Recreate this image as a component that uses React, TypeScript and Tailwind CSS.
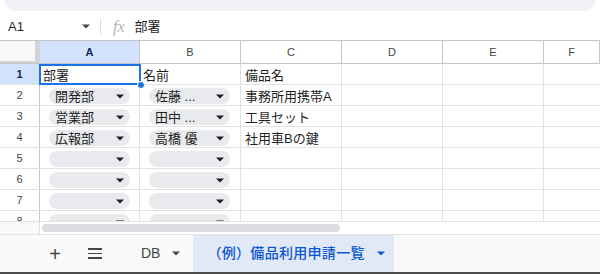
import React from "react";

const font = { fontFamily: '"Liberation Sans", Arial, "Noto Sans CJK JP", sans-serif' };

const cols = ["A", "B", "C", "D", "E", "F"];
const colW = ["w-[100px]", "w-[101px]", "w-[101px]", "w-[101px]", "w-[101px]", "flex-1"];

const rows: { a?: string; b?: string; c?: string; chip: boolean }[] = [
  { a: "部署", b: "名前", c: "備品名", chip: false },
  { a: "開発部", b: "佐藤 ...", c: "事務所用携帯A", chip: true },
  { a: "営業部", b: "田中 ...", c: "工具セット", chip: true },
  { a: "広報部", b: "高橋 優", c: "社用車Bの鍵", chip: true },
  { chip: true },
  { chip: true },
  { chip: true },
  { chip: true },
];

function Caret({ className = "" }: { className?: string }) {
  return (
    <svg width="8" height="5" viewBox="0 0 8 5" className={className}>
      <path d="M0 0.5h8L4 4.5z" fill="currentColor" />
    </svg>
  );
}

function Chip({ text, ml }: { text?: string; ml: string }) {
  return (
    <div className={`${ml} mt-[3px] flex h-[16px] w-[81px] items-center justify-between rounded-full bg-[#e8eaed] pl-[6px] pr-[6px]`}>
      <span className="truncate text-[13px] leading-none text-[#1f1f1f]">{text}</span>
      <Caret className="shrink-0 text-[#1f1f1f]" />
    </div>
  );
}

export default function App() {
  return (
    <div className="relative flex h-[274px] w-[600px] flex-col overflow-hidden bg-white" style={font}>
      <div className="mx-[4px] h-[11px] shrink-0 rounded-b-[12px] bg-[#f0f2f6]" />

      {/* formula bar */}
      <div className="flex h-[29px] shrink-0 items-center pt-[2px]">
        <span className="ml-[8px] w-[74px] text-[13px] text-[#1f1f1f]">A1</span>
        <Caret className="text-[#444746]" />
        <div className="ml-[10px] h-[16px] w-px bg-[#dadce0]" />
        <span className="ml-[12px] text-[16px] italic text-[#b0b3b8]" style={{ fontFamily: '"Liberation Serif", serif' }}>
          fx
        </span>
        <span className="ml-[10px] text-[13px] text-[#1f1f1f]">部署</span>
      </div>

      {/* column header */}
      <div className="flex h-[24px] shrink-0 border-y border-[#c4c7c5] bg-white">
        <div className="flex w-[40px] bg-[#d4d4d4]">
          <div className="h-[20px] w-[35px] bg-[#f8f9fa]" />
        </div>
        {cols.map((c, i) => (
          <div
            key={c}
            className={`${colW[i]} flex items-center justify-center border-r border-[#c4c7c5] text-[11px] ${
              i === 0 ? "bg-[#d3e3fd] font-bold text-[#0b2a5c]" : "text-[#444746]"
            }`}
          >
            {c}
          </div>
        ))}
      </div>

      {/* rows */}
      <div className="relative h-[157px] shrink-0 overflow-hidden">
        {rows.map((r, idx) => (
          <div key={idx} className="flex h-[21px] border-b border-[#e1e1e1]">
            <div
              className={`flex w-[40px] items-center justify-center border-r border-[#c4c7c5] text-[11px] ${
                idx === 0 ? "bg-[#d3e3fd] font-bold text-[#0b2a5c]" : "text-[#444746]"
              }`}
            >
              {idx + 1}
            </div>
            <div className="w-[100px] border-r border-[#e1e1e1]">
              {r.chip ? <Chip text={r.a} ml="ml-[9px]" /> : <div className="pl-[3px] pt-[2px] text-[13px] text-[#1f1f1f]">{r.a}</div>}
            </div>
            <div className="w-[101px] border-r border-[#e1e1e1]">
              {r.chip ? <Chip text={r.b} ml="ml-[9px]" /> : <div className="pl-[3px] pt-[2px] text-[13px] text-[#1f1f1f]">{r.b}</div>}
            </div>
            <div className="w-[101px] border-r border-[#e1e1e1] pl-[4px] pt-[2px] text-[13px] text-[#1f1f1f]">{r.c}</div>
            <div className="w-[101px] border-r border-[#e1e1e1]" />
            <div className="w-[101px] border-r border-[#e1e1e1]" />
            <div className="flex-1" />
          </div>
        ))}
        {/* selection */}
        <div className="absolute left-[39px] top-0 h-[21px] w-[102px] border-2 border-[#1a73e8]" />
        <div className="absolute left-[137px] top-[17px] h-[8px] w-[8px] rounded-full border border-white bg-[#1a73e8]" />
      </div>

      {/* scrollbar */}
      <div className="flex h-[13px] shrink-0 border-t border-[#e1e1e1]">
        <div className="w-[40px] border-r border-[#e1e1e1] bg-[#f8f9fa]" />
        <div className="ml-[2px] mt-[2px] h-[8px] w-[298px] rounded-full bg-[#dadce0]" />
      </div>

      {/* sheet tabs */}
      <div className="flex h-[38px] shrink-0 items-center border-t border-[#e3e3e3] bg-[#f8f9fa] text-[#444746]">
        <span className="ml-[48px] w-[14px] text-center text-[20px] font-light leading-none">+</span>
        <div className="ml-[26px] flex flex-col gap-[3px]">
          <div className="h-[1.5px] w-[14px] bg-[#444746]" />
          <div className="h-[1.5px] w-[14px] bg-[#444746]" />
          <div className="h-[1.5px] w-[14px] bg-[#444746]" />
        </div>
        <span className="ml-[39px] text-[14px] text-[#444746]">DB</span>
        <Caret className="ml-[12px] text-[#444746]" />
        <div className="ml-[13px] flex h-full w-[201px] items-center bg-[#e1e9f7] pl-[14px] text-[#0b57d0]">
          <span className="text-[14px] font-medium tracking-[0.3px]">（例）備品利用申請一覧</span>
          <Caret className="ml-[12px]" />
        </div>
      </div>

      <div className="h-[2px] shrink-0 bg-[#4d4d4d]" />
    </div>
  );
}
